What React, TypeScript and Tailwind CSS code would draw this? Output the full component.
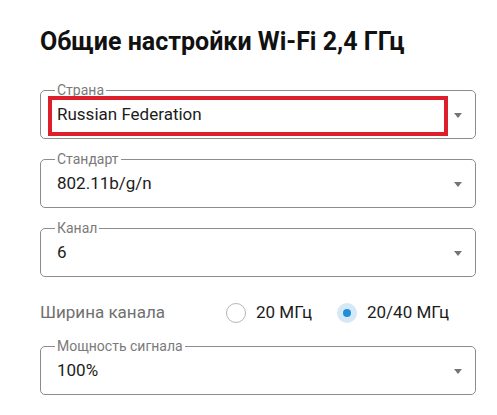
import type { ReactNode } from 'react';

const font = { fontFamily: 'Roboto, "Noto Sans", sans-serif' };

function Caret() {
  return (
    <svg width="8" height="5" viewBox="0 0 8 5" className="shrink-0">
      <path d="M0 0 L8 0 L4 5 Z" fill="#757575" />
    </svg>
  );
}

function SelectField({ label, value, highlight, className = '' }: { label: string; value: string; highlight?: boolean; className?: string }) {
  return (
    <fieldset className={`relative border border-[#8c8c8c] rounded-[5px] pl-[16px] pr-[13px] pb-[6px] m-0 ${className}`}>
      <legend className="ml-[-2px] px-[2px] text-[14px] leading-[16px] text-[#7a7a7a]">{label}</legend>
      <div className="flex items-center h-[34px] justify-between">
        <span className="text-[17px] text-[#1c1c1c]">{value}</span>
        <Caret />
      </div>
      {highlight && (
        <div className="absolute left-[7px] top-[-2px] w-[400px] h-[40px] border-4 border-[#dc1f2b]" />
      )}
    </fieldset>
  );
}

function Radio({ checked, children }: { checked?: boolean; children: ReactNode }) {
  return (
    <label className="flex items-center gap-[10px]">
      {checked ? (
        <span className="w-[20px] h-[20px] rounded-full bg-[#d5e8f6] flex items-center justify-center">
          <span className="w-[8px] h-[8px] rounded-full bg-[#1c8fd8]" />
        </span>
      ) : (
        <span className="w-[20px] h-[20px] rounded-full border border-[#b5b5b5] bg-white" />
      )}
      <span className="text-[17px] text-[#1c1c1c]">{children}</span>
    </label>
  );
}

export default function App() {
  return (
    <div className="w-[497px] h-[415px] bg-white px-[40px] pt-[26px]" style={font}>
      <h1 className="text-[25px] leading-[32px] font-bold text-[#111]">Общие настройки Wi-Fi 2,4 ГГц</h1>

      <div className="mt-[24px] flex flex-col w-[436px]">
        <SelectField label="Страна" value="Russian Federation" highlight />
        <SelectField label="Стандарт" value="802.11b/g/n" className="mt-[12px]" />
        <SelectField label="Канал" value="6" className="mt-[12px]" />

        {/* Channel width */}
        <div className="flex items-center h-[40px] mt-[16px]">
          <span className="text-[17px] text-[#707070] w-[186px]">Ширина канала</span>
          <div className="flex items-center gap-[25px]">
            <Radio>20 МГц</Radio>
            <Radio checked>20/40 МГц</Radio>
          </div>
        </div>

        <SelectField label="Мощность сигнала" value="100%" className="mt-[5px]" />
      </div>
    </div>
  );
}
